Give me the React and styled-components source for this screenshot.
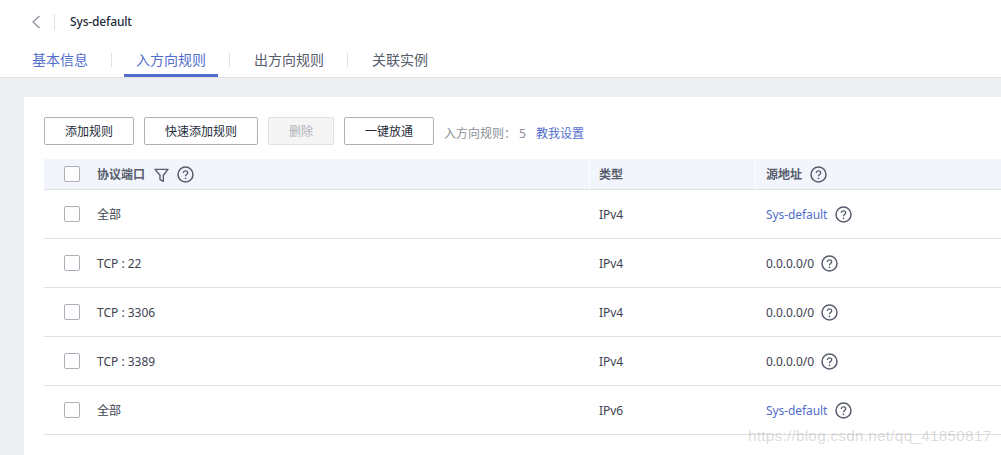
import styled, { createGlobalStyle } from 'styled-components'

const Global = createGlobalStyle`
html, body { margin: 0; padding: 0; height: 100%; }
body {
  background: #eeeff3;
  overflow: hidden;
  font-family: "Noto Sans", "Noto Sans CJK SC", sans-serif;
  font-size: 12px;
  color: #252b3a;
}
`

const Page = styled.div`
position: relative;
width: 1001px;
height: 455px;
overflow: hidden;`

const Top = styled.header`
height: 77px;
background: #fff;
border-bottom: 1px solid #dfe1e6;`

const TitleRow = styled.div`
display: flex;
align-items: center;
height: 43px;
padding-left: 30px;`

const Back = styled.svg`
width: 12px;
height: 16px;
display: block;`

const TitleSep = styled.span`
width: 1px;
height: 16px;
margin: 0 15px 0 12px;
background: #dfe1e6;`

const Title = styled.h1`
margin: 0;
font-size: 12px;
font-weight: 500;
letter-spacing: -0.15px;
color: #252b3a;`

const Tabs = styled.nav`
display: flex;
align-items: stretch;
height: 34px;
padding-left: 20px;`

const Tab = styled.a`
display: flex;
align-items: center;
justify-content: center;
height: 31px;
padding: 0 12px;
font-size: 14px;
color: ${p => (p.$blue ? '#526ecc' : '#575d6c')};
border-bottom: 3px solid ${p => (p.$active ? '#526ecc' : 'transparent')};`

const TabSep = styled.span`
width: 1px;
height: 14px;
margin: 10px 12px 0 11px;
background: #dfe1e6;`

const Card = styled.main`
margin: 19px 0 0 24px;
height: 358px;
background: #fff;
padding: 20px 0 0 20px;`

const Toolbar = styled.div`
display: flex;
align-items: center;
gap: 10px;
height: 28px;`

const Button = styled.button`
box-sizing: border-box;
width: ${p => p.$w}px;
height: 28px;
padding: 0;
font-family: inherit;
font-size: 12px;
background: ${p => (p.disabled ? '#f5f5f6' : '#fff')};
color: ${p => (p.disabled ? '#adb0b8' : '#252b3a')};
border: 1px solid ${p => (p.disabled ? '#dfe1e6' : '#adb0b8')};
border-radius: 2px;`

const Count = styled.span`
padding-top: 4px;
color: #8a8e99;`

const Help = styled.a`
padding-top: 4px;
color: #526ecc;`

const Table = styled.div`
margin-top: 14px;
width: 957px;`

const Row = styled.div`
display: grid;
grid-template-columns: 545px 166px 1fr;
align-items: center;
height: ${p => (p.$head ? 30 : 48)}px;
background: ${p => (p.$head ? '#f2f5fc' : '#fff')};
border-bottom: 1px solid #dfe1e6;`

const Cell = styled.div`
display: flex;
align-items: center;
height: 100%;
padding-left: ${p => p.$pad || 9}px;
border-left: ${p => (p.$line ? '1px solid #fff' : 'none')};
font-weight: ${p => (p.$head ? 600 : 400)};
color: ${p => (p.$head ? '#575d6c' : '#3c4250')};`

const Check = styled.span`
box-sizing: border-box;
width: 16px;
height: 16px;
margin-right: 17px;
background: #fff;
border: 1px solid #adb0b8;
border-radius: 2px;`

const Link = styled.a`
letter-spacing: -0.08px;
color: #526ecc;`

const Plain = styled.span`
letter-spacing: -0.05px;`

const IconWrap = styled.svg`
display: block;
flex: none;
width: 17px;
height: 17px;
margin-left: ${p => p.$ml || 8}px;
color: #575d6c;`

const Watermark = styled.div`
position: absolute;
left: 748px;
top: 427px;
font-family: "Liberation Sans", sans-serif;
font-size: 15.4px;
letter-spacing: 0.22px;
color: rgba(120, 120, 120, 0.27);
white-space: nowrap;`

function Question({ ml }) {
  return (
    <IconWrap $ml={ml} viewBox="0 0 17 17" fill="none" stroke="currentColor">
      <circle cx="8.5" cy="8.5" r="7.5" strokeWidth="1.5" />
      <path d="M6.3 6.9c0-1.3 1-2.1 2.2-2.1s2.2.8 2.2 2c0 1.7-2.2 1.7-2.2 3.4" strokeWidth="1.3" />
      <circle cx="8.5" cy="12.3" r=".85" fill="currentColor" stroke="none" />
    </IconWrap>
  )
}

function Filter() {
  return (
    <IconWrap $ml={8} viewBox="0 0 17 17" fill="none" stroke="currentColor">
      <path d="M2 3.4h13L10.3 9.2v6.2L7 13.6V9.2z" strokeWidth="1.4" strokeLinejoin="round" />
    </IconWrap>
  )
}

const rules = [
  { port: '全部', type: 'IPv4', link: true },
  { port: 'TCP : 22', type: 'IPv4', source: '0.0.0.0/0' },
  { port: 'TCP : 3306', type: 'IPv4', source: '0.0.0.0/0' },
  { port: 'TCP : 3389', type: 'IPv4', source: '0.0.0.0/0' },
  { port: '全部', type: 'IPv6', link: true },
]

export default function App() {
  return (
    <Page>
      <Global />
      <Top>
        <TitleRow>
          <Back viewBox="0 0 12 16" fill="none" stroke="#8a8e99" strokeWidth="1.2">
            <path d="M9.5 2 3 8l6.5 6" />
          </Back>
          <TitleSep />
          <Title>Sys-default</Title>
        </TitleRow>
        <Tabs>
          <Tab $blue>基本信息</Tab>
          <TabSep />
          <Tab $blue $active>入方向规则</Tab>
          <TabSep />
          <Tab>出方向规则</Tab>
          <TabSep />
          <Tab>关联实例</Tab>
        </Tabs>
      </Top>
      <Card>
        <Toolbar>
          <Button $w={90}>添加规则</Button>
          <Button $w={114}>快速添加规则</Button>
          <Button $w={66} disabled>删除</Button>
          <Button $w={90}>一键放通</Button>
          <Count>入方向规则： 5</Count>
          <Help>教我设置</Help>
        </Toolbar>
        <Table>
          <Row $head>
            <Cell $head $pad={20}>
              <Check />
              协议端口
              <Filter />
              <Question ml={7} />
            </Cell>
            <Cell $head $line>类型</Cell>
            <Cell $head $line $pad={10}>
              源地址
              <Question ml={8} />
            </Cell>
          </Row>
          {rules.map((r, i) => (
            <Row key={i}>
              <Cell $pad={20}>
                <Check />
                {r.port}
              </Cell>
              <Cell $line><Plain>{r.type}</Plain></Cell>
              <Cell $line $pad={10}>
                {r.link ? <Link>Sys-default</Link> : <Plain>{r.source}</Plain>}
                <Question ml={r.link ? 8 : 7} />
              </Cell>
            </Row>
          ))}
        </Table>
      </Card>
      <Watermark>https://blog.csdn.net/qq_41850817</Watermark>
    </Page>
  )
}
